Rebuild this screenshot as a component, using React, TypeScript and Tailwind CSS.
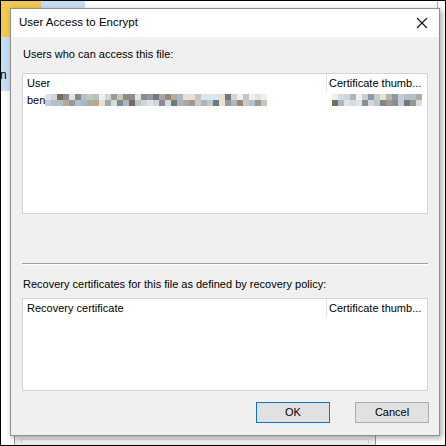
import React from "react";

const font = { fontFamily: '"Liberation Sans", Arial, sans-serif' };

const palette = [
  "#8a9aa8", "#c8ccd0", "#e8e0d0", "#b8a898", "#d8dcd8", "#c0c8c0", "#a4a8a8",
  "#a8b8c4", "#6c7884", "#988878", "#dde4ea", "#f4efe6", "#7c8894", "#b0b4b0",
  "#d8e6f0", "#a09890", "#cfd6dc", "#786c60", "#8c8c94", "#b4c0c8",
];

function pick(n: number) {
  const x = Math.sin(n * 12.9898 + 78.233) * 43758.5453;
  return palette[Math.floor((x - Math.floor(x)) * palette.length)];
}

function Mosaic({ cols, seed }: { cols: number; seed: number }) {
  return (
    <div className="flex flex-col">
      {[0, 1].map((r) => (
        <div key={r} className="flex">
          {Array.from({ length: cols }, (_, c) => (
            <div
              key={c}
              className="h-[6px] w-[6px]"
              style={{ backgroundColor: pick(seed + r * 101 + c * 7) }}
            />
          ))}
        </div>
      ))}
    </div>
  );
}

function ListBox({
  first,
  height,
  children,
}: {
  first: string;
  height: string;
  children?: React.ReactNode;
}) {
  return (
    <div className={`mx-[11px] border border-[#d5d5d5] bg-white ${height}`}>
      <div className="flex h-[18px] items-center whitespace-nowrap">
        <div className="w-[303px] shrink-0 pl-[4px] pt-[1px]">{first}</div>
        <div className="h-full w-px shrink-0 bg-[#e5e5e5]" />
        <div className="pl-[2px] pt-[1px]">Certificate thumb...</div>
      </div>
      {children}
    </div>
  );
}

export default function App() {
  return (
    <div
      className="relative h-[446px] w-[446px] overflow-hidden border border-black bg-white text-[11px] text-black"
      style={font}
    >
      {/* desktop behind the dialog */}
      <div className="absolute left-0 top-0 h-[36px] w-[40px] bg-[#f2c84e]" />
      <div className="absolute left-[40px] top-0 h-[8px] w-[44px] bg-[#c6def4]" />
      <div className="absolute left-0 top-[36px] h-[54px] w-[10px] bg-[#c6def4]">
        <span className="absolute left-[-1px] top-[32px] text-[12px] leading-none">n</span>
      </div>
      <div className="absolute left-[436px] top-0 h-[10px] w-px bg-[#a8a8a8]" />
      <div className="absolute left-[13px] top-[428px] h-[20px] w-[362px] border-x border-[#9a9a9a] bg-[#f0f0f0]">
        <div className="mx-[6px] mt-[10px] h-[6px] border border-[#dcdcdc] bg-[#f4f4f4]" />
      </div>

      {/* dialog */}
      <div className="absolute left-[9px] top-[7px] flex h-[428px] w-[430px] flex-col border border-[#8f8f8f] bg-[#f0f0f0] shadow-[2px_2px_6px_rgba(0,0,0,0.35)]">
        <div className="flex h-[28px] items-center justify-between bg-white pl-[8px] pr-[9px]">
          <span className="text-[11.5px]">User Access to Encrypt</span>
          <svg width="12" height="12" viewBox="0 0 12 12" className="mr-[2px]">
            <path d="M1 1L11 11M11 1L1 11" stroke="#111" strokeWidth="1.1" />
          </svg>
        </div>

        <div className="pl-[12px] pt-[10px] leading-[15px]">Users who can access this file:</div>
        <div className="h-[11px]" />
        <ListBox first="User" height="h-[141px]">
          <div className="flex h-[16px] items-center whitespace-nowrap">
            <div className="flex w-[307px] shrink-0 items-center pl-[4px]">
              <span>ben</span>
              <Mosaic cols={37} seed={7} />
            </div>
            <div className="pl-[2px]">
              <Mosaic cols={15} seed={31} />
            </div>
          </div>
        </ListBox>

        <div className="mx-[11px] mt-[49px] h-[2px] border-t border-[#a0a0a0] border-b border-b-white bg-[#c8c8c8]" />

        <div className="pl-[12px] pt-[12px] leading-[15px]">
          Recovery certificates for this file as defined by recovery policy:
        </div>
        <div className="h-[6px]" />
        <ListBox first="Recovery certificate" height="h-[93px]" />

        <div className="mt-[11px] flex justify-end gap-[25px] pr-[10px]">
          <button className="h-[21px] w-[74px] border border-[#0078d7] bg-[#e1e1e1]">OK</button>
          <button className="h-[21px] w-[74px] border border-[#adadad] bg-[#e1e1e1]">Cancel</button>
        </div>
      </div>
    </div>
  );
}
